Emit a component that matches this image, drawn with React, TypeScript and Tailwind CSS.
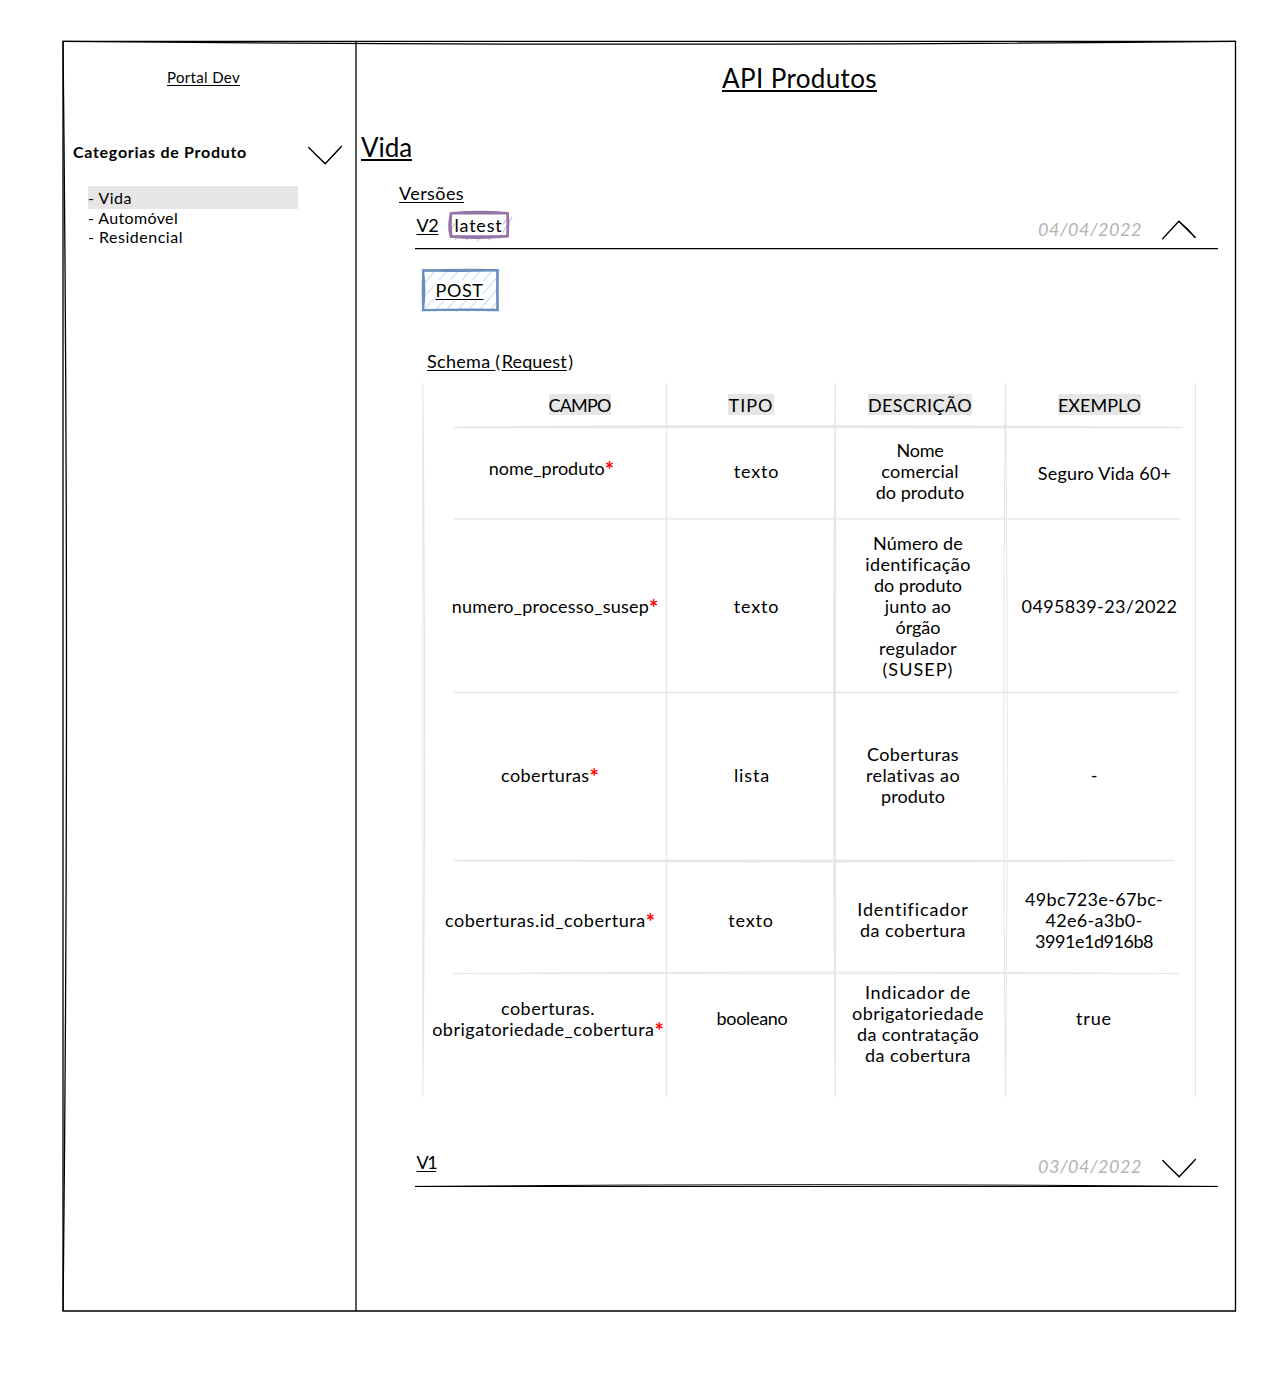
import type { ReactNode } from "react";

type Line = [text: string, tracking: string, required?: boolean];
type Cell = { className: string; lines: Line[] };

const headers: { text: string; className: string; tracking: string }[] = [
  { text: "CAMPO", className: "pl-[69px]", tracking: "tracking-[-0.83px]" },
  { text: "TIPO", className: "", tracking: "tracking-[1.03px]" },
  { text: "DESCRIÇÃO", className: "", tracking: "tracking-[0.39px]" },
  { text: "EXEMPLO", className: "pr-[1px]", tracking: "tracking-[0px]" },
];

const rows: { height: string; cells: Cell[] }[] = [
  {
    height: "h-[92px]",
    cells: [
      { className: "pt-[30px] pl-[13px]", lines: [["nome_produto", "tracking-[0px]", true]] },
      { className: "pt-[33px] pl-[11px]", lines: [["texto", "tracking-[0.8px]"]] },
      {
        className: "pt-[12px]",
        lines: [
          ["Nome", "tracking-[-0.25px]"],
          ["comercial", "tracking-[0.25px]"],
          ["do produto", "tracking-[0.05px]"],
        ],
      },
      { className: "pt-[35px] pl-[9px]", lines: [["Seguro Vida 60+", "tracking-[0.2px]"]] },
    ],
  },
  {
    height: "h-[174px]",
    cells: [
      { className: "pt-[76px] pl-[20px]", lines: [["numero_processo_susep", "tracking-[0.22px]", true]] },
      { className: "pt-[76px] pl-[11px]", lines: [["texto", "tracking-[0.8px]"]] },
      {
        className: "pt-[13px] pr-[4px]",
        lines: [
          ["Número de", "tracking-[0.16px]"],
          ["identificação", "tracking-[0.38px]"],
          ["do produto", "tracking-[0px]"],
          ["junto ao", "tracking-[0.25px]"],
          ["órgão", "tracking-[0px]"],
          ["regulador", "tracking-[0.32px]"],
          ["(SUSEP)", "tracking-[1.06px]"],
        ],
      },
      { className: "pt-[76px] pr-[1px]", lines: [["0495839-23/2022", "tracking-[0.35px]"]] },
    ],
  },
  {
    height: "h-[168px]",
    cells: [
      { className: "pt-[71px] pl-[10px]", lines: [["coberturas", "tracking-[0.4px]", true]] },
      { className: "pt-[71px] pl-[2px]", lines: [["lista", "tracking-[0.85px]"]] },
      {
        className: "pt-[50px] pr-[14px]",
        lines: [
          ["Coberturas", "tracking-[0.42px]"],
          ["relativas ao", "tracking-[0.42px]"],
          ["produto", "tracking-[0.11px]"],
        ],
      },
      { className: "pt-[71px] pr-[12px]", lines: [["-", "tracking-[0px]"]] },
    ],
  },
  {
    height: "h-[112px]",
    cells: [
      { className: "pt-[48px] pl-[10px]", lines: [["coberturas.id_cobertura", "tracking-[0.56px]", true]] },
      { className: "pt-[48px]", lines: [["texto", "tracking-[0.8px]"]] },
      {
        className: "pt-[37px] pr-[14px]",
        lines: [
          ["Identificador", "tracking-[0.88px]"],
          ["da cobertura", "tracking-[0.48px]"],
        ],
      },
      {
        className: "pt-[27px] pr-[12px]",
        lines: [
          ["49bc723e-67bc-", "tracking-[0.34px]"],
          ["42e6-a3b0-", "tracking-[0.29px]"],
          ["3991e1d916b8", "tracking-[-0.47px]"],
        ],
      },
    ],
  },
  {
    height: "h-[122px]",
    cells: [
      {
        className: "pt-[24px] pl-[6px]",
        lines: [
          ["coberturas.", "tracking-[0.48px]"],
          ["obrigatoriedade_cobertura", "tracking-[0.5px]", true],
        ],
      },
      { className: "pt-[34px] pl-[2px]", lines: [["booleano", "tracking-[-0.31px]"]] },
      {
        className: "pt-[8px] pr-[4px]",
        lines: [
          ["Indicador de", "tracking-[0.7px]"],
          ["obrigatoriedade", "tracking-[0.47px]"],
          ["da contratação", "tracking-[0.36px]"],
          ["da cobertura", "tracking-[0.48px]"],
        ],
      },
      { className: "pt-[34px] pr-[12px]", lines: [["true", "tracking-[0.86px]"]] },
    ],
  },
];

const columns = "grid grid-cols-[244px_168px_170px_190px]";

function Underlined({
  children,
  className = "",
  heading = false,
}: {
  children: ReactNode;
  className?: string;
  heading?: boolean;
}) {
  const line = heading ? "decoration-2 underline-offset-[2px]" : "decoration-[1.4px] underline-offset-[1.5px]";
  return (
    <span className={`underline [text-decoration-skip-ink:none] whitespace-pre ${line} ${className}`}>{children}</span>
  );
}

function Chevron({ up = false, className = "" }: { up?: boolean; className?: string }) {
  return (
    <svg className={`w-9 h-5 shrink-0 ${className}`} viewBox="0 0 36 20" fill="none" stroke="#000" strokeWidth="1.3">
      {up ? (
        <>
          <path d="M1.2 19.2 L17.8 1.2 L34.5 17.6" />
          <path d="M17.8 1.2 Q27.4 9 34.5 17.8" />
        </>
      ) : (
        <>
          <path d="M1.4 2.2 L18.2 18.8 L34.8 1" />
          <path d="M1.4 2.2 Q9 10.6 18.2 18.8 Q27 10 34.8 1" strokeWidth="0.9" />
        </>
      )}
    </svg>
  );
}

function VersionRow({
  label,
  date,
  open = false,
  labelClass,
  badge,
}: {
  label: string;
  date: string;
  open?: boolean;
  labelClass: string;
  badge?: ReactNode;
}) {
  return (
    <div className="relative ml-[59px] flex h-[45px] w-[803px] items-start">
      <div className="pt-[11px] pl-[1.5px]">
        <Underlined className={labelClass}>{label}</Underlined>
      </div>
      {badge}
      <div className="ml-auto flex items-start pr-[21px]">
        <span className="pt-[15px] pr-[19px] text-[#b3b3b3] italic tracking-[0.54px]">{date}</span>
        <Chevron up={open} className={open ? "mt-[16px]" : "mt-[17px]"} />
      </div>
      <svg className="absolute top-[41px] left-0 h-2 w-[803px]" viewBox="0 0 803 8" fill="none" stroke="#000" strokeWidth="1.3">
        {open ? (
          <path d="M0 3.6 H803" />
        ) : (
          <>
            <path d="M0 4.5 H803" strokeWidth="1" />
            <path d="M0 4.4 Q400 1 803 4.4" strokeWidth="1" />
          </>
        )}
      </svg>
    </div>
  );
}

function LatestBadge() {
  return (
    <div className="relative mt-[7px] ml-[10.5px] h-[27px] w-[60px] pt-[5px] pl-[5.5px]">
      <svg className="absolute -top-1 -left-1 h-[36px] w-[72px]" viewBox="-4 -4 72 36" fill="none">
        <g stroke="#d9cce3" strokeWidth="1.6">
          <path d="M1 20 L6 12 M6 29 L10 24 M17 29 L22 25 M28 30 L33 25 M39 29 L44 25 M50 28 L63 6 M51 18 L57 9" />
        </g>
        <g stroke="#9673a6">
          <path d="M2 2.2 Q30 -0.2 58.5 2 Q60 14 58.4 25.2 Q30 28.6 1.6 25.6 Q-1.2 14 2 2.2 Z" strokeWidth="2.2" />
          <path d="M2 2.4 H58.6 V25.4 H2.2 Q1 14 2 2.4 Z" strokeWidth="2.4" />
        </g>
      </svg>
      <span className="relative block h-[18px] w-[48px] bg-white leading-[19px] tracking-[0.79px]">latest</span>
    </div>
  );
}

function PostBadge() {
  return (
    <div className="relative mt-5 ml-[66px] h-[42px] w-[76px] pt-[11px] pl-[13.5px]">
      <svg className="absolute -top-1 -left-1 h-[52px] w-[86px]" viewBox="-4 -4 86 52" fill="none">
        <path
          stroke="#dae8fc"
          strokeWidth="1.8"
          d="M2 15 L13 2 M2 28 L25 2 M2 41 L37 1 M12 43 L48 2 M23 43 L59 1 M34 43 L71 1 M45 43 L77 6 M56 43 L77 18 M67 43 L76 32"
        />
        <path stroke="#6c8ebf" strokeWidth="2.3" d="M1 1.6 Q38 0.4 75.5 1.2 Q75 20 75.6 41 Q38 40.2 1 41.2 Q3.4 20 1 1.6 Z" />
        <path stroke="#6c8ebf" strokeWidth="2" d="M1 1.2 Q30 2.6 75.5 1.2 V41 H1 Q0.4 20 1 1.2 Z" />
      </svg>
      <span className="relative inline-block h-[21px] bg-white">
        <Underlined className="tracking-[0.59px]">POST</Underlined>
      </span>
    </div>
  );
}

function TableRules() {
  return (
    <svg
      className="pointer-events-none absolute top-0 left-0 h-[714px] w-[776px] overflow-visible"
      viewBox="0 0 776 714"
      fill="none"
      stroke="#e6e6e6"
      strokeWidth="1.3"
    >
      <path d="M-0.2 0.5 V713.5 M-0.2 0.5 Q3.4 357 -0.2 713.5" strokeWidth="1.1" />
      <path d="M243.6 0.5 V713.5" />
      <path d="M412.4 0.5 V713.5 M412.4 0.5 Q409 357 412.4 713.5 M412.4 0.5 Q410.6 357 412.4 713.5" />
      <path d="M582.4 0.5 Q579 357 582.4 713.5 M582.4 0.5 Q586 357 582.4 713.5" strokeWidth="1.1" />
      <path d="M772.4 0.5 V713.5" />
      <path d="M30.5 44.5 Q300 41 758 44.5 M30.5 44.5 Q400 43 758 44.5" />
      <path d="M30.5 135.8 H758" />
      <path d="M30.5 309.5 H755.5" />
      <path d="M30.5 477.5 Q390 480 750.5 477.5 M30.5 477.5 Q390 478 750.5 477.5" />
      <path d="M30.5 590.6 Q390 587.4 755.5 590.6 M30.5 590.6 H755.5" strokeWidth="1" />
    </svg>
  );
}

function SchemaTable() {
  return (
    <div className="relative mt-[11px] ml-[67px] w-[772px]">
      <TableRules />
      <div className={`relative h-[45px] ${columns}`}>
        {headers.map((h) => (
          <div key={h.text} className={`flex items-start justify-center pt-[11px] ${h.className}`}>
            <span className={`h-[21px] bg-[#e6e6e6] leading-[23px] ${h.tracking}`}>{h.text}</span>
          </div>
        ))}
      </div>
      {rows.map((row, i) => (
        <div key={i} className={`relative ${row.height} ${columns}`}>
          {row.cells.map((cell, j) => (
            <div key={j} className={`flex flex-col items-center ${cell.className}`}>
              {cell.lines.map(([text, tracking, required]) => (
                <span key={text} className={`flex h-[21px] whitespace-nowrap ${tracking}`}>
                  {text}
                  {required && <span className="pt-[1px] text-[22px] font-bold tracking-normal text-[#ff0000]">*</span>}
                </span>
              ))}
            </div>
          ))}
        </div>
      ))}
    </div>
  );
}

function Frame() {
  return (
    <svg
      className="pointer-events-none absolute -top-1 -left-1 h-[1280px] w-[1184px]"
      viewBox="-4 -4 1184 1280"
      fill="none"
      stroke="#000"
      strokeWidth="1.3"
    >
      <path d="M0 0.4 H1172.5 V1270 H0 Z" />
      <path d="M0 0.4 Q586 6 1172.5 0.4" />
      <path d="M0 0.4 Q7 635 0 1270" />
      <path d="M293 0.4 V1270" />
    </svg>
  );
}

function Sidebar() {
  return (
    <aside className="flex w-[293px] flex-col">
      <div className="pt-[26px] pr-[12px] text-center text-[15px] leading-5">
        <Underlined className="tracking-[0.34px]">Portal Dev</Underlined>
      </div>
      <div className="mt-[55px] flex h-[23px] items-start justify-between pr-[13px] pl-[10px]">
        <span className="text-base leading-5 font-bold tracking-[0.71px]">Categorias de Produto</span>
        <Chevron className="mt-[3px]" />
      </div>
      <ul className="mt-[21px] ml-[25px] w-[210px] text-base">
        <li className="bg-[#e6e6e6] leading-[23px] tracking-[0.49px]">- Vida</li>
        <li className="leading-[17px] tracking-[0.36px]">- Automóvel</li>
        <li className="mt-0.5 leading-[17px] tracking-[0.51px]">- Residencial</li>
      </ul>
    </aside>
  );
}

export default function App() {
  return (
    <div className="min-h-[1393px] bg-white pt-[41px] pl-[63px] font-['Lato',sans-serif] text-[18px] leading-[21px] text-black [font-variant-ligatures:none]">
      <div className="relative flex h-[1270px] w-[1173px]">
        <Frame />
        <Sidebar />
        <main className="flex flex-1 flex-col">
          <h1 className="pt-[21px] pl-[7px] text-center text-[26px] leading-8">
            <Underlined heading className="tracking-[0.37px]">
              API Produtos
            </Underlined>
          </h1>
          <h2 className="mt-[37px] ml-[5px] text-[26px] leading-8">
            <Underlined heading className="tracking-[-0.08px]">
              Vida
            </Underlined>
          </h2>
          <h3 className="mt-5 ml-[43px]">
            <Underlined className="tracking-[0.41px]">Versões</Underlined>
          </h3>
          <VersionRow label="V2" date="04/04/2022" open labelClass="tracking-[-0.32px]" badge={<LatestBadge />} />
          <PostBadge />
          <div className="mt-[40px] ml-[71px] whitespace-pre">
            <Underlined className="tracking-[0.3px]">{"Schema "}</Underlined>
            <span className="tracking-[1.5px]">(</span>
            <Underlined className="tracking-[0.15px]">Request</Underlined>
            <span className="pl-[1.5px]">)</span>
          </div>
          <SchemaTable />
          <div className="mt-[45px]">
            <VersionRow label="V1" date="03/04/2022" labelClass="tracking-[-1.5px]" />
          </div>
        </main>
      </div>
    </div>
  );
}
